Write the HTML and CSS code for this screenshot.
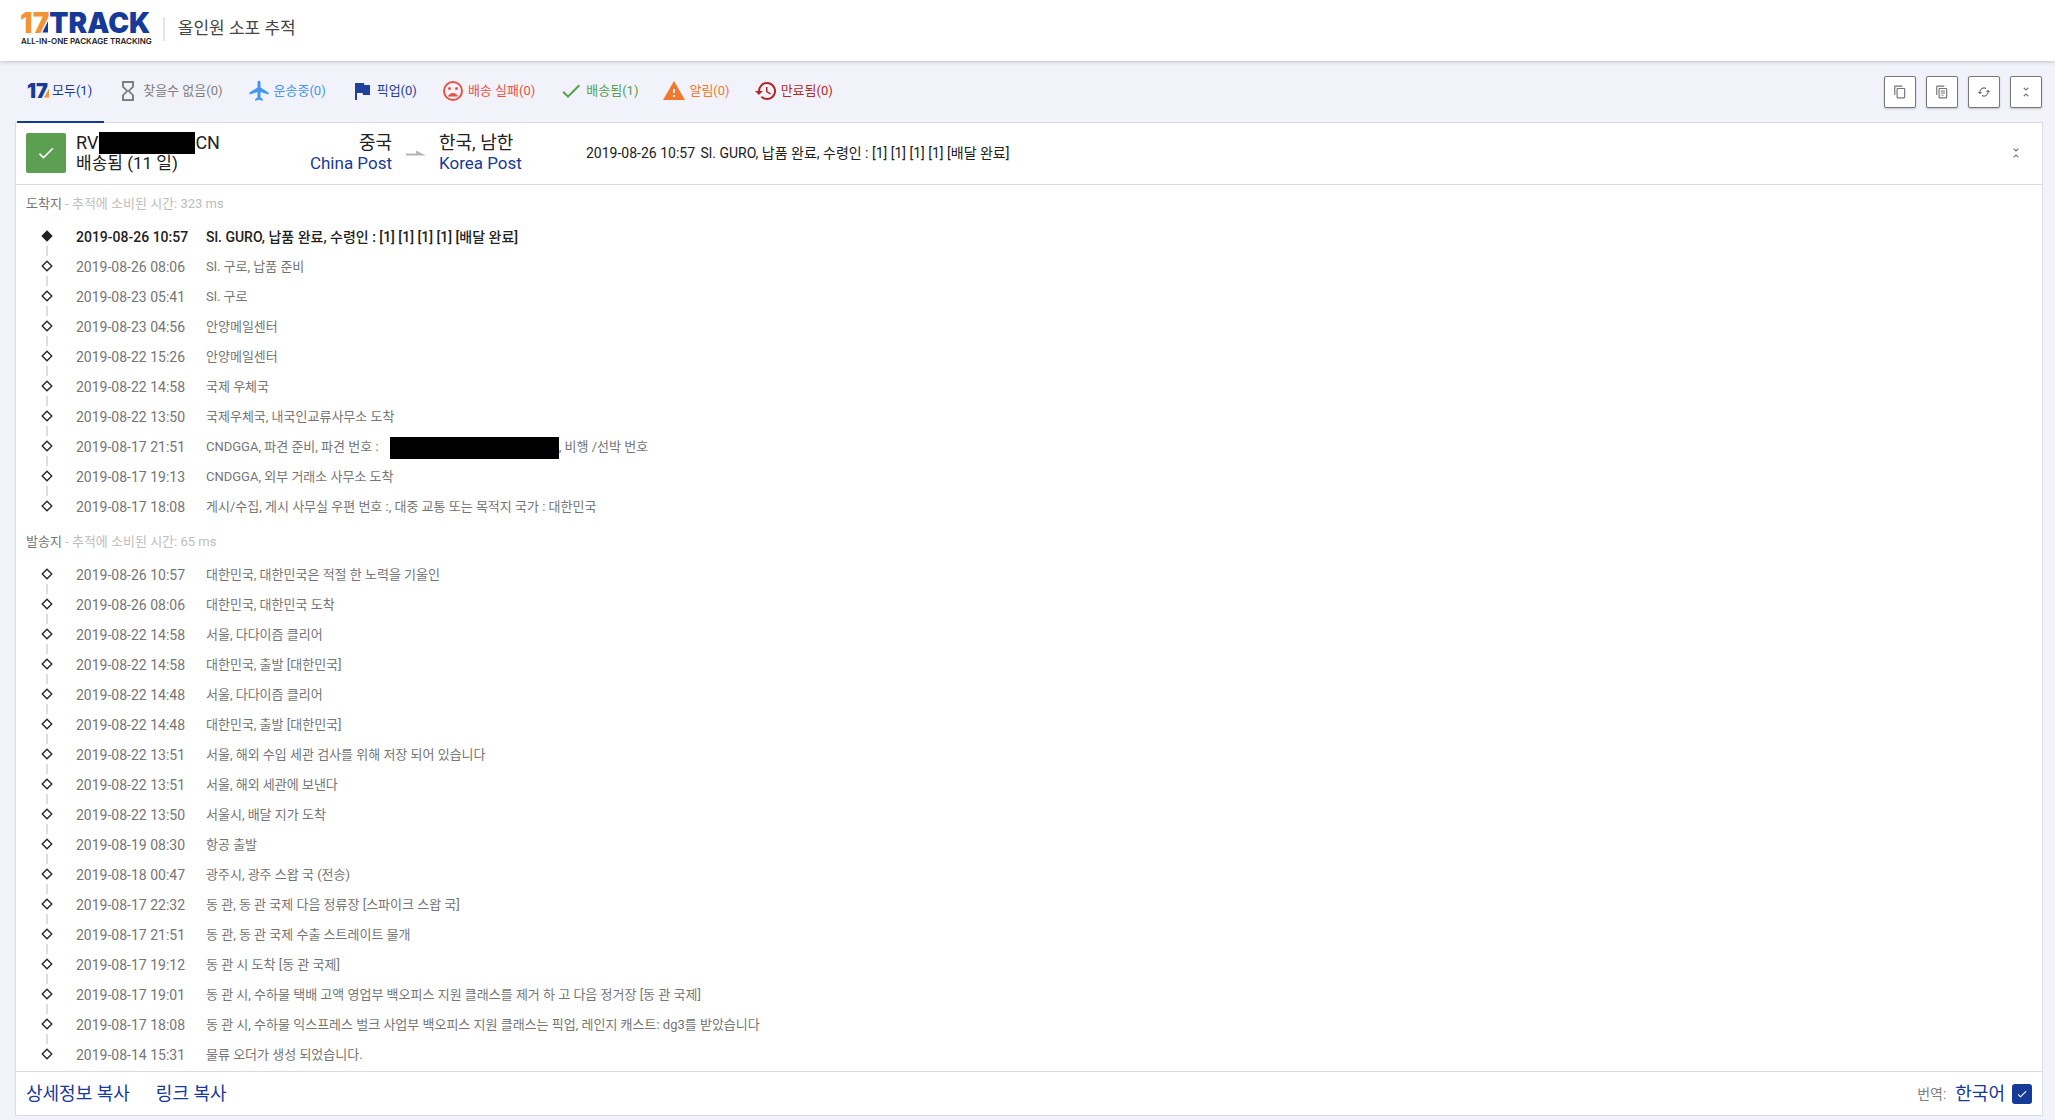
FILE: index.html
```html
<!DOCTYPE html>
<html lang="ko">
<head>
  <meta charset="UTF-8" />
  <meta name="viewport" content="width=device-width, initial-scale=1" />
  <title>17TRACK 올인원 소포 추적</title>
  <link rel="stylesheet" href="styles.css">
</head>
<body>
  <svg class="sprite" aria-hidden="true">
    <symbol id="dot" viewBox="0 0 12 12"><path d="M6 1.2 10.8 6 6 10.8 1.2 6z" fill="none" stroke="#222" stroke-width="1.3"/></symbol>
    <symbol id="dot-full" viewBox="0 0 12 12"><path d="M6 .3 11.7 6 6 11.7 .3 6z" fill="#222"/></symbol>
    <symbol id="check" viewBox="0 0 24 24"><path d="M9 16.17 4.83 12l-1.42 1.41L9 19 21 7l-1.41-1.41z"/></symbol>
    <symbol id="collapse" viewBox="0 0 24 24"><path d="M7.41 18.59 8.83 20 12 16.83 15.17 20l1.41-1.41L12 14l-4.59 4.59zm9.18-13.18L15.17 4 12 7.17 8.83 4 7.41 5.41 12 10l4.59-4.59z"/></symbol>
  </svg>

  <header class="header">
    <a class="logo" href="#" aria-label="17TRACK">
      <span class="logo-name"><span class="logo-17">17</span>TRACK</span>
      <span class="logo-tag">ALL-IN-ONE PACKAGE TRACKING</span>
    </a>
    <h1 class="title">올인원 소포 추적</h1>
  </header>

  <main class="main">
    <div class="toolbar">
      <nav class="tabs">
        <a class="tab all active" href="#"><span class="mini-17">17</span>모두(1)</a>
        <a class="tab notfound" href="#"><svg viewBox="0 0 24 24"><path d="M6 2v6h.01L6 8.01 10 12l-4 4 .01.01H6V22h12v-5.99h-.01L18 16l-4-4 4-3.99-.01-.01H18V2H6zm10 14.5V20H8v-3.500l4-4 4 4zm-4-5-4-4V4h8v3.500l-4 4z"/></svg>찾을수 없음(0)</a>
        <a class="tab transit" href="#"><svg viewBox="0 0 24 24"><path d="M21.500 15.500v-2l-8-5V3.300c0-.8-.7-1.500-1.500-1.500s-1.500.7-1.500 1.500v5.200l-8 5v2l8-2.500v5.500l-2.300 1.600v1.600L12 20.700l3.800 1v-1.600l-2.300-1.600V13l8 2.500z"/></svg>운송중(0)</a>
        <a class="tab pickup" href="#"><svg viewBox="0 0 24 24"><path d="M14.400 6 14 4H5v17h2v-7h5.600l.4 2h7V6z"/></svg>픽업(0)</a>
        <a class="tab failed" href="#"><svg viewBox="0 0 24 24"><path d="M12 2a10 10 0 1 0 0 20 10 10 0 0 0 0-20zm0 18a8 8 0 1 1 0-16 8 8 0 0 1 0 16zm0-6c-2.330 0-4.320 1.450-5.120 3.500h10.240C16.320 15.450 14.330 14 12 14z"/><circle cx="15.500" cy="9.500" r="1.500"/><circle cx="8.500" cy="9.500" r="1.500"/></svg>배송 실패(0)</a>
        <a class="tab delivered" href="#"><svg><use href="#check"/></svg>배송됨(1)</a>
        <a class="tab alert" href="#"><svg viewBox="0 0 24 24"><path d="M1 21h22L12 2 1 21zm12-3h-2v-2h2v2zm0-4h-2v-4h2v4z"/></svg>알림(0)</a>
        <a class="tab expired" href="#"><svg viewBox="0 0 24 24"><path d="M13 3a9 9 0 0 0-9 9H1l3.890 3.890.07.14L9 12H6a7 7 0 1 1 2.060 4.940l-1.420 1.420A9 9 0 1 0 13 3zm-1 5v5l4.280 2.540.72-1.210-3.500-2.080V8H12z"/></svg>만료됨(0)</a>
      </nav>
      <div class="actions">
        <button class="icon-btn" aria-label="복사"><svg viewBox="0 0 24 24"><path d="M16 1H4c-1.100 0-2 .9-2 2v14h2V3h12V1zm3 4H8c-1.100 0-2 .9-2 2v14c0 1.100.9 2 2 2h11c1.100 0 2-.9 2-2V7c0-1.100-.9-2-2-2zm0 16H8V7h11v14z"/></svg></button>
        <button class="icon-btn" aria-label="상세정보 복사"><svg viewBox="0 0 24 24"><path d="M16 1H4c-1.100 0-2 .9-2 2v14h2V3h12V1zm3 4H8c-1.100 0-2 .9-2 2v14c0 1.100.9 2 2 2h11c1.100 0 2-.9 2-2V7c0-1.100-.9-2-2-2zm0 16H8V7h11v14zM10 9.500h7v1.700h-7zm0 3.500h7v1.700h-7zm0 3.500h5v1.700h-5z"/></svg></button>
        <button class="icon-btn" aria-label="새로고침"><svg viewBox="0 0 24 24"><path d="m19 8-4 4h3a6 6 0 0 1-8.800 5.300l-1.460 1.460A8 8 0 0 0 20 12h3l-4-4zM6 12a6 6 0 0 1 8.800-5.300l1.460-1.460A8 8 0 0 0 4 12H1l4 4 4-4H6z"/></svg></button>
        <button class="icon-btn" aria-label="접기"><svg><use href="#collapse"/></svg></button>
      </div>
    </div>

    <section class="panel">
      <div class="summary">
        <span class="status"><svg><use href="#check"/></svg></span>
        <div class="number">
          <div class="big">RV<span class="mask mask-number"></span>CN</div>
          <div>배송됨 (11 일)</div>
        </div>
        <div class="origin">
          <div class="big">중국</div>
          <a href="#">China Post</a>
        </div>
        <svg class="arrow" viewBox="0 0 20 6"><path d="M0 5.500v-2h10V.5l10 5z"/></svg>
        <div class="dest">
          <div class="big">한국, 남한</div>
          <a href="#">Korea Post</a>
        </div>
        <div class="latest"><time>2019-08-26 10:57</time> Sl. GURO, 납품 완료, 수령인 : [1] [1] [1] [1] [배달 완료]</div>
        <button class="fold" aria-label="접기"><svg><use href="#collapse"/></svg></button>
      </div>

      <h2 class="place">도착지 <span>- 추적에 소비된 시간: 323 ms</span></h2>
      <ol class="events">
        <li class="current"><svg><use href="#dot-full"/></svg><time>2019-08-26 10:57</time><p>Sl. GURO, 납품 완료, 수령인 : [1] [1] [1] [1] [배달 완료]</p></li>
        <li><svg><use href="#dot"/></svg><time>2019-08-26 08:06</time><p>Sl. 구로, 납품 준비</p></li>
        <li><svg><use href="#dot"/></svg><time>2019-08-23 05:41</time><p>Sl. 구로</p></li>
        <li><svg><use href="#dot"/></svg><time>2019-08-23 04:56</time><p>안양메일센터</p></li>
        <li><svg><use href="#dot"/></svg><time>2019-08-22 15:26</time><p>안양메일센터</p></li>
        <li><svg><use href="#dot"/></svg><time>2019-08-22 14:58</time><p>국제 우체국</p></li>
        <li><svg><use href="#dot"/></svg><time>2019-08-22 13:50</time><p>국제우체국, 내국인교류사무소 도착</p></li>
        <li><svg><use href="#dot"/></svg><time>2019-08-17 21:51</time><p>CNDGGA, 파견 준비, 파견 번호 : <span class="mask mask-dispatch"></span>, 비행 /선박 번호</p></li>
        <li><svg><use href="#dot"/></svg><time>2019-08-17 19:13</time><p>CNDGGA, 외부 거래소 사무소 도착</p></li>
        <li><svg><use href="#dot"/></svg><time>2019-08-17 18:08</time><p>게시/수집, 게시 사무실 우편 번호 :, 대중 교통 또는 목적지 국가 : 대한민국</p></li>
      </ol>

      <h2 class="place">발송지 <span>- 추적에 소비된 시간: 65 ms</span></h2>
      <ol class="events">
        <li><svg><use href="#dot"/></svg><time>2019-08-26 10:57</time><p>대한민국, 대한민국은 적절 한 노력을 기울인</p></li>
        <li><svg><use href="#dot"/></svg><time>2019-08-26 08:06</time><p>대한민국, 대한민국 도착</p></li>
        <li><svg><use href="#dot"/></svg><time>2019-08-22 14:58</time><p>서울, 다다이즘 클리어</p></li>
        <li><svg><use href="#dot"/></svg><time>2019-08-22 14:58</time><p>대한민국, 출발 [대한민국]</p></li>
        <li><svg><use href="#dot"/></svg><time>2019-08-22 14:48</time><p>서울, 다다이즘 클리어</p></li>
        <li><svg><use href="#dot"/></svg><time>2019-08-22 14:48</time><p>대한민국, 출발 [대한민국]</p></li>
        <li><svg><use href="#dot"/></svg><time>2019-08-22 13:51</time><p>서울, 해외 수입 세관 검사를 위해 저장 되어 있습니다</p></li>
        <li><svg><use href="#dot"/></svg><time>2019-08-22 13:51</time><p>서울, 해외 세관에 보낸다</p></li>
        <li><svg><use href="#dot"/></svg><time>2019-08-22 13:50</time><p>서울시, 배달 지가 도착</p></li>
        <li><svg><use href="#dot"/></svg><time>2019-08-19 08:30</time><p>항공 출발</p></li>
        <li><svg><use href="#dot"/></svg><time>2019-08-18 00:47</time><p>광주시, 광주 스왑 국 (전송)</p></li>
        <li><svg><use href="#dot"/></svg><time>2019-08-17 22:32</time><p>동 관, 동 관 국제 다음 정류장 [스파이크 스왑 국]</p></li>
        <li><svg><use href="#dot"/></svg><time>2019-08-17 21:51</time><p>동 관, 동 관 국제 수출 스트레이트 물개</p></li>
        <li><svg><use href="#dot"/></svg><time>2019-08-17 19:12</time><p>동 관 시 도착 [동 관 국제]</p></li>
        <li><svg><use href="#dot"/></svg><time>2019-08-17 19:01</time><p>동 관 시, 수하물 택배 고액 영업부 백오피스 지원 클래스를 제거 하 고 다음 정거장 [동 관 국제]</p></li>
        <li><svg><use href="#dot"/></svg><time>2019-08-17 18:08</time><p>동 관 시, 수하물 익스프레스 벌크 사업부 백오피스 지원 클래스는 픽업, 레인지 캐스트: dg3를 받았습니다</p></li>
        <li><svg><use href="#dot"/></svg><time>2019-08-14 15:31</time><p>물류 오더가 생성 되었습니다.</p></li>
      </ol>

      <footer class="panel-footer">
        <button class="link-btn">상세정보 복사</button>
        <button class="link-btn">링크 복사</button>
        <div class="translate">
          <span class="translate-label">번역:</span>
          <label class="link-btn" for="translate">한국어</label>
          <span class="tick"><input type="checkbox" id="translate" checked><svg><use href="#check"/></svg></span>
        </div>
      </footer>
    </section>
  </main>
</body>
</html>
```
FILE: styles.css
```css
* {
  box-sizing: border-box;
}
body {
  margin: 0;
  background: #f1f2fa;
  color: #212121;
  font-family: Roboto, "Noto Sans CJK KR", sans-serif;
  font-size: 14px;
  line-height: 20px;
}
a {
  color: #163a97;
  text-decoration: none;
}
button {
  font: inherit;
  padding: 0;
  background: none;
  border: none;
  cursor: pointer;
}
svg {
  display: block;
  fill: currentColor;
}
.sprite {
  position: absolute;
  width: 0;
  height: 0;
}

/* header */
.header {
  display: flex;
  align-items: center;
  height: 61px;
  padding: 0 20px;
  background: #fff;
  box-shadow: 0 1px 4px rgba(0, 0, 0, 0.2);
}
.logo {
  display: flex;
  flex-direction: column;
  padding-bottom: 5px;
  font-family: Inter, sans-serif;
}
.logo-name {
  font-size: 28px;
  font-weight: 900;
  line-height: 26px;
}
.logo-17 {
  position: relative;
  color: #f29435;
}
/* small wedge beside the foot of the 7 */
.logo-17::after, .mini-17::after {
  content: "";
  position: absolute;
  right: 1px;
  bottom: 7px;
  width: 6px;
  height: 12px;
  background: #163a97;
  clip-path: polygon(100% 0, 100% 100%, 0 100%);
}
.logo-tag {
  padding-left: 1px;
  color: #222;
  font-size: 8px;
  font-weight: 600;
  line-height: 11px;
}
.title {
  margin: 0 0 4px 11px;
  padding: 0 0 2px 13px;
  border-left: 2px solid #e5e5e5;
  color: #444;
  font-size: 17px;
  font-weight: 400;
  line-height: 22px;
}

/* tabs */
.main {
  padding: 0 12px 5px 15px;
}
.toolbar {
  display: flex;
  justify-content: space-between;
  align-items: center;
  height: 61px;
}
.tabs {
  display: flex;
  gap: 2px;
  height: 100%;
  padding-left: 2px;
  font-size: 13px;
}
.tab {
  display: flex;
  align-items: center;
  gap: 3px;
  height: 62px;
  padding: 0 12px 3px 10px;
}
.tab svg {
  width: 24px;
  height: 24px;
}
.tab.active {
  padding-bottom: 1px;
  border-bottom: 2px solid #163a97;
}
.mini-17 {
  position: relative;
  width: 22px;
  font-family: Inter, sans-serif;
  font-size: 20px;
  font-weight: 900;
}
.mini-17::after {
  right: 0;
  bottom: 3px;
  width: 5px;
  height: 9px;
  background: #f29435;
}
.notfound { color: #808080; }
.transit { color: #4296f0; }
.pickup { color: #1e429c; }
.failed { color: #e65445; }
.delivered { color: #55a04f; }
.alert { color: #f1782e; }
.expired { color: #b02a2a; }
.actions {
  display: flex;
  gap: 10px;
  padding-right: 1px;
}
.icon-btn {
  display: flex;
  justify-content: center;
  align-items: center;
  width: 32px;
  height: 32px;
  background: #fff;
  border: 1px solid #777;
  border-radius: 2px;
  box-shadow: 0 1px 2px rgba(0, 0, 0, 0.2);
  color: #757575;
}
.icon-btn svg, .fold svg {
  width: 14px;
  height: 14px;
}

/* package */
.panel {
  background: #fff;
  border: 1px solid #dcdcdf;
}
.summary {
  display: flex;
  align-items: center;
  height: 62px;
  padding: 0 19px 1px 10px;
  border-bottom: 1px solid #dcdcdf;
  font-size: 17px;
  line-height: 21px;
}
.summary .big {
  font-size: 18px;
}
.status {
  display: flex;
  justify-content: center;
  align-items: center;
  width: 40px;
  height: 40px;
  margin-right: 10px;
  background: #5c9e52;
  border-radius: 2px;
  color: #fff;
}
.status svg {
  width: 20px;
  height: 20px;
}
.number {
  width: 180px;
}
.mask {
  display: inline-block;
  height: 22px;
  background: #000;
  vertical-align: middle;
}
.mask-number {
  width: 96px;
  margin: -4px 0 -2px 1px;
}
.mask-dispatch {
  width: 169px;
  margin-left: 8px;
}
.origin {
  width: 136px;
  text-align: right;
}
.arrow {
  width: 20px;
  height: 6px;
  margin: 0 13px 0 14px;
  color: #b5b5b5;
}
.dest {
  width: 147px;
}
.latest {
  flex: 1;
  font-size: 14px;
}
.latest time {
  margin-right: 2px;
}
.fold {
  color: #757575;
}
.place {
  margin: 0;
  padding: 8px 10px;
  color: #757575;
  font-size: 13px;
  font-weight: 400;
  line-height: 21px;
}
.place span {
  color: #bdbdbd;
}
.events {
  margin: 0;
  padding: 0 25px 1px;
  list-style: none;
}
.events li {
  display: grid;
  grid-template-columns: 35px 130px 1fr;
  height: 30px;
  color: #757575;
  line-height: 30px;
}
.events svg {
  width: 12px;
  height: 12px;
  margin-top: 8px;
}
.events p {
  margin: 0;
  font-size: 13px;
}
.events .current {
  color: #212121;
  font-weight: 500;
}
.events .current p {
  font-size: 14px;
}
/* line between two markers */
.events li:not(:last-child)::after {
  content: "";
  width: 2px;
  height: 10px;
  margin: -6px 0 0 5px;
  background: #ddd;
}

/* footer */
.panel-footer {
  display: flex;
  align-items: center;
  gap: 26px;
  height: 44px;
  padding: 0 10px;
  border-top: 1px solid #dcdcdf;
}
.link-btn {
  color: #163a97;
  font-size: 18px;
}
.translate {
  display: flex;
  align-items: center;
  gap: 7px;
  margin-left: auto;
}
.translate-label {
  margin-right: 2px;
  color: #808080;
}
.tick {
  display: grid;
}
.tick input, .tick svg {
  grid-area: 1 / 1;
}
.tick input {
  appearance: none;
  width: 20px;
  height: 20px;
  margin: 0;
  background: #163a97;
  border-radius: 3px;
}
.tick svg {
  place-self: center;
  width: 12px;
  height: 12px;
  color: #fff;
  pointer-events: none;
}
```
